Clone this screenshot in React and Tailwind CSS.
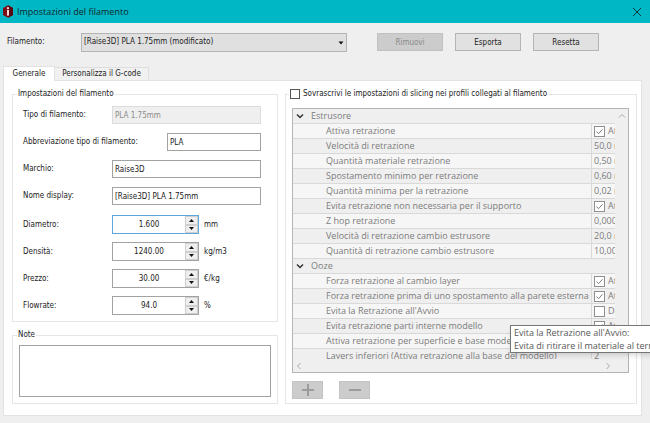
import React from "react";

const textFields = [
  { id: "tipo", label: "Tipo di filamento:", value: "PLA 1.75mm", disabled: true },
  { id: "abbreviazione", label: "Abbreviazione tipo di filamento:", value: "PLA", short: true },
  { id: "marchio", label: "Marchio:", value: "Raise3D" },
  { id: "nome", label: "Nome display:", value: "[Raise3D] PLA 1.75mm" },
];

const numberFields = [
  { id: "diametro", label: "Diametro:", value: "1.600", unit: "mm", focused: true },
  { id: "densita", label: "Densità:", value: "1240.00", unit: "kg/m3" },
  { id: "prezzo", label: "Prezzo:", value: "30.00", unit: "€/kg" },
  { id: "flowrate", label: "Flowrate:", value: "94.0", unit: "%" },
];

const settings = [
  { group: "Estrusore" },
  { name: "Attiva retrazione", checked: true, value: "Attiva" },
  { name: "Velocità di retrazione", value: "50,0 mm/s" },
  { name: "Quantità materiale retrazione", value: "0,50 mm" },
  { name: "Spostamento minimo per retrazione", value: "0,60 mm" },
  { name: "Quantità minima per la retrazione", value: "0,02 mm" },
  { name: "Evita retrazione non necessaria per il supporto", checked: true, value: "Attiva" },
  { name: "Z hop retrazione", value: "0,000 mm" },
  { name: "Velocità di retrazione cambio estrusore", value: "20,0 mm/s" },
  { name: "Quantità di retrazione cambio estrusore", value: "10,00 mm" },
  { group: "Ooze" },
  { name: "Forza retrazione al cambio layer", checked: true, value: "Attiva" },
  { name: "Forza retrazione prima di uno spostamento alla parete esterna", checked: true, value: "Attiva" },
  { name: "Evita la Retrazione all'Avvio", checked: false, value: "Disattiva" },
  { name: "Evita retrazione parti interne modello", checked: true, value: "Attiva" },
  { name: "Attiva retrazione per superficie e base modello", checked: true, value: "Attiva" },
  { name: "Layers inferiori (Attiva retrazione alla base del modello)", value: "2" },
];

const Chevron = ({ d, className }) => (
  <svg viewBox="0 0 8 8" className={className} fill="none" stroke="currentColor" aria-hidden="true">
    <path d={d} />
  </svg>
);

const TitleBar = () => (
  <header className="flex h-[23px] items-center bg-[#00b7c6] pl-[2px] pr-2">
    <svg viewBox="0 0 12 13" className="h-[13px] w-3" aria-hidden="true">
      <path d="M6 0.3 L11 3 V10 L6 12.7 L1 10 V3 Z" fill="#7d0d16" />
      <path d="M6 0.3 L11 3 V10 L6 12.7 Z" fill="#5c0710" />
      <rect x="5" y="2.2" width="2" height="2" fill="#f3d9da" />
      <rect x="5" y="5" width="2" height="5.6" fill="#f3d9da" />
    </svg>
    <h1 className="ml-[3px] flex-1 font-['Open_Sans',sans-serif] text-[9px] text-[#10272b]">Impostazioni del filamento</h1>
    <button type="button" aria-label="Chiudi" className="text-[#0c3a3f]">
      <svg viewBox="0 0 10 10" className="size-[10px]" fill="none" stroke="currentColor" aria-hidden="true">
        <path d="M1 1 L9 9 M9 1 L1 9" />
      </svg>
    </button>
  </header>
);

const Toolbar = () => (
  <div className="flex h-[43px] items-center pb-[5px] pl-[7px]">
    <label htmlFor="filamento" className="w-[74px]">Filamento:</label>
    <div className="relative mr-[30px] w-[266px]">
      <select id="filamento" className="block h-[19px] w-full appearance-none border border-[#b4b4b4] bg-[#e0e0e0] px-[2px]">
        <option>[Raise3D] PLA 1.75mm (modificato)</option>
      </select>
      <svg viewBox="0 0 6 4" className="pointer-events-none absolute right-[3px] top-2 h-1 w-[6px]" aria-hidden="true">
        <path d="M0.5 0.5 H5.5 L3 3.5 Z" fill="#111" />
      </svg>
    </div>
    <div className="flex gap-3">
      <button type="button" disabled className="h-[18px] w-[66px] border border-[#c0c0c0] bg-[#cccccc] pt-[2px] text-[#8a8a8a]">Rimuovi</button>
      <button type="button" className="h-[18px] w-[66px] border border-[#b4b4b4] bg-[#e1e1e1] pt-[2px]">Esporta</button>
      <button type="button" className="h-[18px] w-[66px] border border-[#b4b4b4] bg-[#e1e1e1] pt-[2px]">Resetta</button>
    </div>
  </div>
);

const TextField = ({ id, label, value, disabled, short }) => (
  <div className="flex h-[18px] items-center justify-between">
    <label htmlFor={id}>{label}</label>
    <input
      id={id}
      type="text"
      defaultValue={value}
      disabled={disabled}
      className={`h-[18px] border px-[2px] ${short ? "w-[94px]" : "w-[149px]"} ${
        disabled ? "border-[#dcdcdc] bg-[#efefef] text-[#8c8c8c]" : "border-[#a2a2a2] bg-white"
      }`}
    />
  </div>
);

const NumberField = ({ id, label, value, unit, focused }) => (
  <div className="flex h-[19px] items-center">
    <label htmlFor={id} className="w-[89px]">{label}</label>
    <div className={`flex h-[19px] w-[87px] border bg-white ${focused ? "border-[#5ba7dc]" : "border-[#a2a2a2]"}`}>
      <input id={id} type="text" defaultValue={value} className="w-0 flex-1 text-center outline-none" />
      <div className="flex w-[13px] flex-col">
        <button type="button" aria-label="Aumenta" className="flex flex-1 items-center justify-center border border-[#cfcfcf] bg-[#efefef]">
          <svg viewBox="0 0 5 3" className="h-[3px] w-[5px]"><path d="M0 3 H5 L2.5 0 Z" fill="#111" /></svg>
        </button>
        <button type="button" aria-label="Diminuisci" className="flex flex-1 items-center justify-center border border-[#cfcfcf] bg-[#efefef]">
          <svg viewBox="0 0 5 3" className="h-[3px] w-[5px]"><path d="M0 0 H5 L2.5 3 Z" fill="#111" /></svg>
        </button>
      </div>
    </div>
    <span className="ml-[5px]">{unit}</span>
  </div>
);

const CheckBox = ({ checked, label }) => (
  <span className="relative flex shrink-0">
    <input
      type="checkbox"
      disabled
      defaultChecked={checked}
      aria-label={label}
      className="size-[11px] appearance-none border border-[#8f8f8f] bg-white"
    />
    {checked && (
      <svg viewBox="0 0 11 11" className="pointer-events-none absolute inset-0 size-[11px]" fill="none" stroke="#7d7d7d" aria-hidden="true">
        <path d="M2.5 5.5 L4.5 7.7 L8.5 3.3" />
      </svg>
    )}
  </span>
);

const SettingsTree = () => (
  <div className="flex h-[265px] flex-col border border-[#b2b4b8] bg-[#efefef] font-['Open_Sans',sans-serif] text-[9px] text-[#7c7c7c]">
    <div className="flex min-h-0 flex-1">
      <div className="min-w-0 flex-1 overflow-hidden">
        <table className="w-full table-fixed border-separate border-spacing-0">
          <colgroup>
            <col />
            <col className="w-6" />
          </colgroup>
          <tbody>
            {settings.map((row) =>
              row.group ? (
                <tr key={row.group} className="bg-[#efefef]">
                  <th colSpan={2} className="h-[15px] border-b border-[#d9d9d9] p-0 text-left font-normal leading-[14px]">
                    <span className="flex items-center">
                      <Chevron d="M1 2.5 L4 5.5 L7 2.5" className="ml-[3px] mr-[7px] size-2 stroke-[1.5] text-[#333]" />
                      {row.group}
                    </span>
                  </th>
                </tr>
              ) : (
                <tr key={row.name} className="odd:bg-[#efefef] even:bg-[#f6f6f6]">
                  <td className="h-[15px] overflow-hidden whitespace-nowrap border-b border-[#d9d9d9] p-0 pl-[33px] leading-[14px]">
                    {row.name}
                  </td>
                  <td className="h-[15px] overflow-hidden border-b border-l border-[#d9d9d9] p-0 leading-[14px]">
                    <div className="flex items-center gap-[3px] overflow-hidden whitespace-nowrap pl-[2px]">
                      {row.checked !== undefined && <CheckBox checked={row.checked} label={row.name} />}
                      {row.value}
                    </div>
                  </td>
                </tr>
              )
            )}
          </tbody>
        </table>
      </div>
      <div className="flex w-[13px] flex-col items-center justify-between pb-1 pt-[3px] text-[#ababab]">
        <Chevron d="M1 5.5 L4 2.5 L7 5.5" className="size-2" />
        <Chevron d="M1 2.5 L4 5.5 L7 2.5" className="size-2" />
      </div>
    </div>
    <div className="flex h-[13px] items-center justify-between pl-[2px] pr-4 text-[#ababab]">
      <Chevron d="M5.5 1 L2.5 4 L5.5 7" className="size-2" />
      <Chevron d="M2.5 1 L5.5 4 L2.5 7" className="size-2" />
    </div>
  </div>
);

const App = () => {
  return (
    <div className="relative min-h-screen overflow-hidden bg-[#efefef] pb-[6px] font-['DejaVu_Sans_Condensed','DejaVu_Sans',sans-serif] text-[8px] leading-3 text-[#222]">
      <TitleBar />
      <Toolbar />

      <main className="ml-[3px] mr-2">
        <div role="tablist" className="flex h-[14px] items-end">
          <button type="button" role="tab" aria-selected="true" className="z-10 -mb-px h-[15px] w-[52px] border border-b-0 border-[#e2e2e2] bg-white">
            Generale
          </button>
          <button type="button" role="tab" aria-selected="false" className="h-[13px] w-[94px] border border-b-0 border-l-0 border-[#dedede] bg-[#f1f1f1]">
            Personalizza il G-code
          </button>
        </div>

        <div className="flex gap-[7px] border border-[#e2e2e2] bg-white pb-[11px] pl-2 pr-1 pt-[7px]">
          <div className="flex w-[266px] flex-col gap-[7px]">
            <fieldset className="border border-[#e6e6e6] pb-[6px] pl-[10px] pr-4">
              <legend className="ml-[-6px] px-[1px]">Impostazioni del filamento</legend>
              <div className="flex flex-col gap-[9px] pt-[6px]">
                {textFields.map((field) => (
                  <TextField key={field.id} {...field} />
                ))}
              </div>
              <div className="flex flex-col gap-2 pt-[10px]">
                {numberFields.map((field) => (
                  <NumberField key={field.id} {...field} />
                ))}
              </div>
            </fieldset>

            <fieldset className="border border-[#e6e6e6] px-[6px] pb-[6px]">
              <legend className="ml-[-2px] px-[1px]">
                <label htmlFor="note">Note</label>
              </legend>
              <textarea id="note" className="mt-1 block h-[52px] w-full resize-none border border-[#a2a2a2] bg-white" />
            </fieldset>
          </div>

          <fieldset className="min-w-0 flex-1 border border-[#e6e6e6] pb-1 pl-[6px] pr-[7px]">
            <legend className="ml-[-3px] px-[1px]">
              <label className="flex items-center gap-[3px]">
                <input type="checkbox" className="size-[10px] appearance-none border border-[#555] bg-white" />
                Sovrascrivi le impostazioni di slicing nei profili collegati al filamento
              </label>
            </legend>
            <div className="pt-2">
              <SettingsTree />
            </div>
            <div className="flex gap-4 pt-2">
              <button type="button" disabled aria-label="Aggiungi" className="flex h-[18px] w-[31px] items-center justify-center border border-[#c4c4c4] bg-[#cccccc]">
                <svg viewBox="0 0 12 12" className="size-3" stroke="#9c9c9c" strokeWidth="2"><path d="M0 6 H12 M6 0 V12" /></svg>
              </button>
              <button type="button" disabled aria-label="Rimuovi" className="flex h-[18px] w-[31px] items-center justify-center border border-[#c4c4c4] bg-[#cccccc]">
                <svg viewBox="0 0 12 12" className="size-3" stroke="#9c9c9c" strokeWidth="2"><path d="M0 6 H12" /></svg>
              </button>
            </div>
          </fieldset>
        </div>
      </main>

      <div
        role="tooltip"
        className="absolute left-[510px] top-[325px] z-20 w-[240px] whitespace-nowrap border border-[#767676] bg-white pl-[3px] font-['Open_Sans',sans-serif] text-[9px] leading-[13px] text-[#575757] shadow-md"
      >
        <p>Evita la Retrazione all'Avvio:</p>
        <p>Evita di ritirare il materiale al termine della stampa</p>
      </div>
    </div>
  );
};

export default App;
